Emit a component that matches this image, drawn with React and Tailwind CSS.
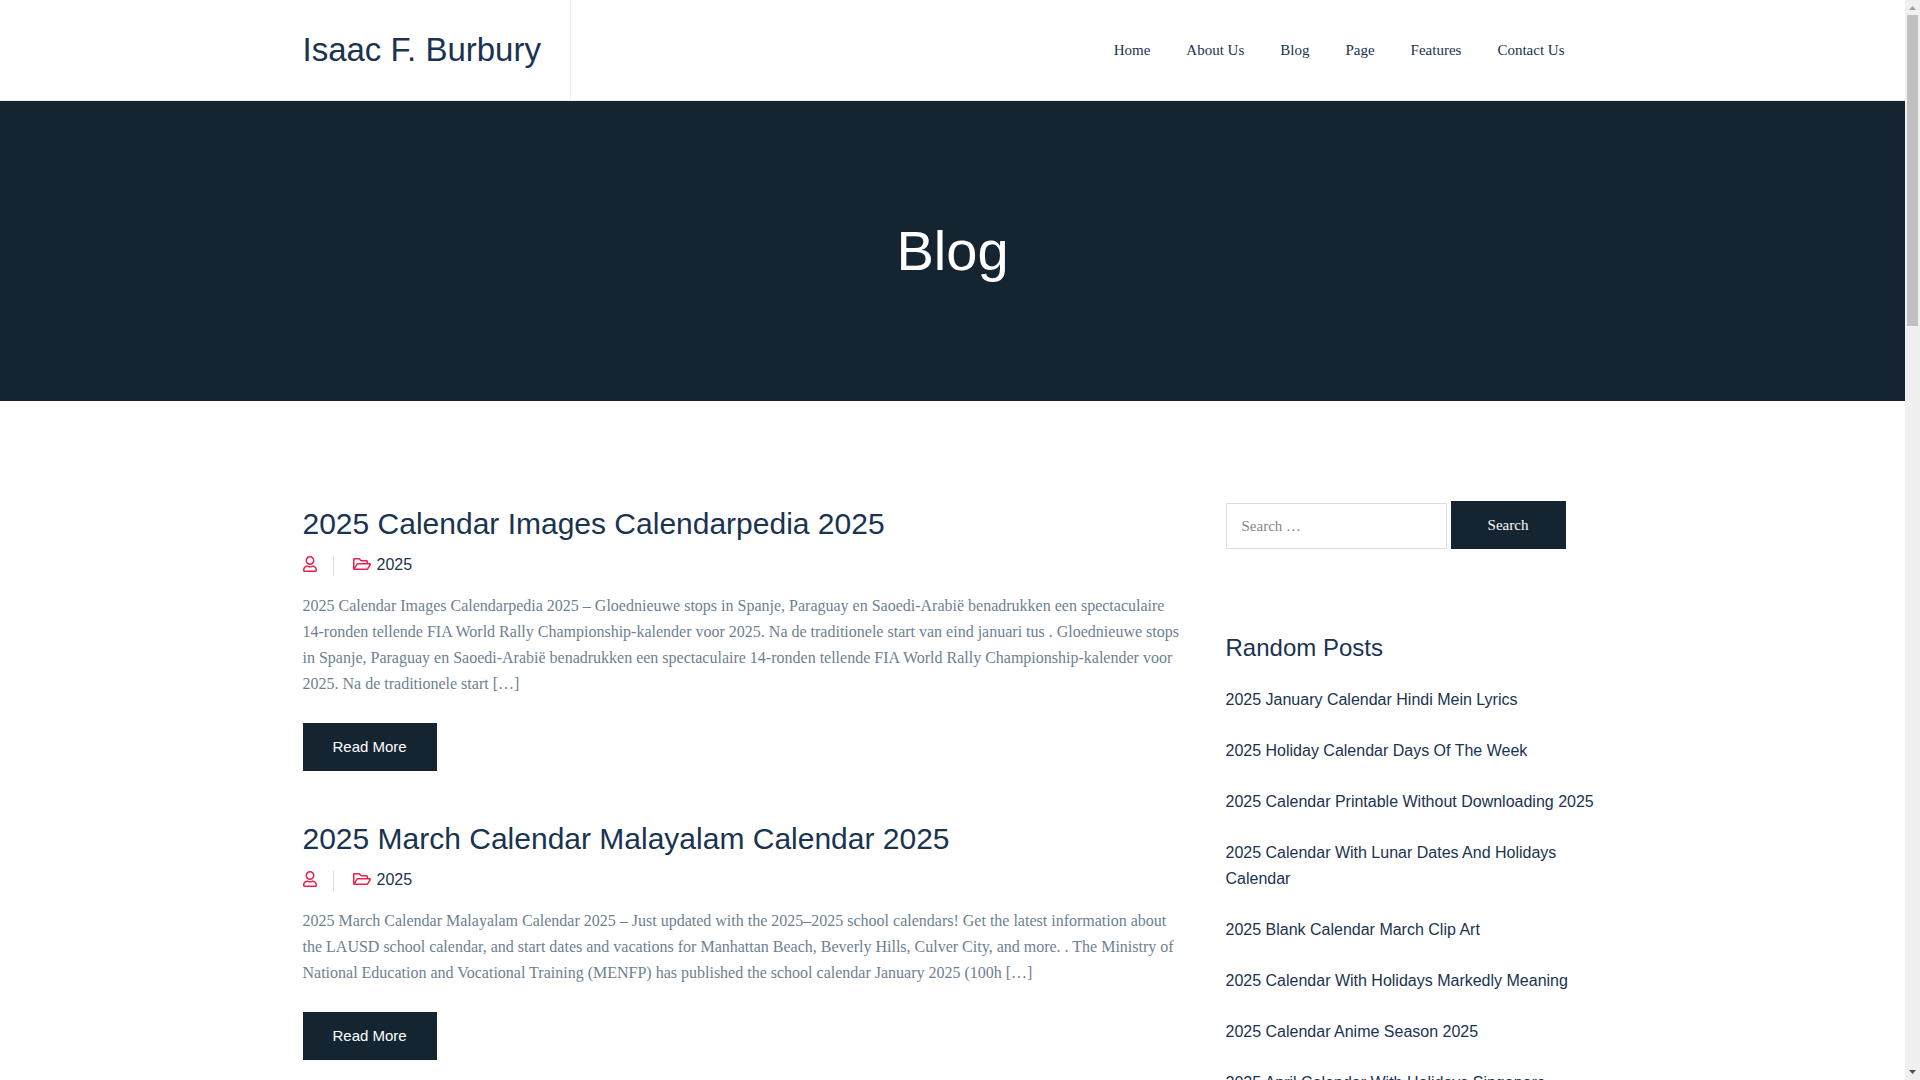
import React, { useState } from 'react';
import { FaRegFolderOpen, FaRegUser } from 'react-icons/fa';

const navItems = ['Home', 'About Us', 'Blog', 'Page', 'Features', 'Contact Us'];

const posts = [
  {
    title: '2025 Calendar Images Calendarpedia 2025',
    category: '2025',
    excerpt:
      '2025 Calendar Images Calendarpedia 2025 – Gloednieuwe stops in Spanje, Paraguay en Saoedi-Arabië benadrukken een spectaculaire 14-ronden tellende FIA World Rally Championship-kalender voor 2025. Na de traditionele start van eind januari tus . Gloednieuwe stops in Spanje, Paraguay en Saoedi-Arabië benadrukken een spectaculaire 14-ronden tellende FIA World Rally Championship-kalender voor 2025. Na de traditionele start […]'
  },
  {
    title: '2025 March Calendar Malayalam Calendar 2025',
    category: '2025',
    excerpt:
      '2025 March Calendar Malayalam Calendar 2025 – Just updated with the 2025–2025 school calendars! Get the latest information about the LAUSD school calendar, and start dates and vacations for Manhattan Beach, Beverly Hills, Culver City, and more. . The Ministry of National Education and Vocational Training (MENFP) has published the school calendar January 2025 (100h […]'
  }
];

const randomPosts = [
  '2025 January Calendar Hindi Mein Lyrics',
  '2025 Holiday Calendar Days Of The Week',
  '2025 Calendar Printable Without Downloading 2025',
  '2025 Calendar With Lunar Dates And Holidays Calendar',
  '2025 Blank Calendar March Clip Art',
  '2025 Calendar With Holidays Markedly Meaning',
  '2025 Calendar Anime Season 2025',
  '2025 April Calendar With Holidays Singapore'
];

const Header = () => (
  <header className="border-b border-[#eeeeee]">
    <div className="max-w-[1300px] mx-auto h-[100px] flex justify-between">
      <a
        href="#"
        className="flex items-center pr-[29px] border-r border-[#eeeeee] font-['Liberation_Sans',sans-serif] text-[33px] leading-10 text-[#1a3350]"
      >
        Isaac F. Burbury
      </a>
      <nav className="flex items-center gap-9 pr-[38px]">
        {navItems.map(item => (
          <a key={item} href="#" className="text-[15px] leading-6 text-[#1a3350]">
            {item}
          </a>
        ))}
      </nav>
    </div>
  </header>
);

const Post = ({ post }) => (
  <article>
    <h2 className="font-['Liberation_Sans',sans-serif] text-[30px] leading-[46px] text-[#1a3350]">
      <a href="#">{post.title}</a>
    </h2>
    <div className="mt-[5px] h-[26px] flex items-start">
      <FaRegUser className="mt-1 w-[14px] h-4 text-[#e8204f]" />
      <span className="mt-1 ml-4 mr-[19px] w-px h-5 bg-[#dddddd]" />
      <FaRegFolderOpen className="mt-1 w-[18px] h-4 text-[#e8204f]" />
      <a href="#" className="ml-1.5 font-['Liberation_Sans',sans-serif] text-base leading-[26px] text-[#1a3350]">
        {post.category}
      </a>
    </div>
    <p className="mt-[15px] text-base leading-[26px] text-[#6d7f92]">{post.excerpt}</p>
    <a
      href="#"
      className="mt-[26px] inline-flex h-12 items-center px-[30px] bg-[#142430] font-['Liberation_Sans',sans-serif] text-[15px] text-white"
    >
      Read More
    </a>
  </article>
);

const Sidebar = () => {
  const [query, setQuery] = useState('');

  return (
    <aside className="w-[377px] shrink-0">
      <form onSubmit={(e) => e.preventDefault()} className="flex items-end gap-1">
        <input
          type="search"
          aria-label="Search"
          placeholder="Search …"
          value={query}
          onChange={(e) => setQuery(e.target.value)}
          className="w-[221px] h-[46px] border border-[#dddddd] px-[15px] text-[15px] placeholder:text-[#858585]"
        />
        <button type="submit" className="w-[115px] h-12 bg-[#142430] text-[15px] text-white">
          Search
        </button>
      </form>

      <h2 className="mt-20 font-['Liberation_Sans',sans-serif] text-2xl leading-[38px] text-[#1a3350]">
        Random Posts
      </h2>
      <ul className="mt-5 space-y-[25px] font-['Liberation_Sans',sans-serif] text-base leading-[26px] text-[#1a3350]">
        {randomPosts.map(title => (
          <li key={title}>
            <a href="#">{title}</a>
          </li>
        ))}
      </ul>
    </aside>
  );
};

const ScrollRail = () => (
  <div className="w-[15px] shrink-0 flex flex-col items-center bg-[#f0f0f0]" aria-hidden="true">
    <svg className="w-[15px] h-[15px]" viewBox="0 0 15 15">
      <path d="M4 10h7L7.500 6z" fill="#a0a0a0" />
    </svg>
    <div className="w-[11px] grow">
      <div className="h-[311px] bg-[#c0c0c0]" />
    </div>
    <svg className="w-[15px] h-[15px]" viewBox="0 0 15 15">
      <path d="M4 5h7L7.500 9z" fill="#505050" />
    </svg>
  </div>
);

const App = () => (
  <div className="h-screen flex bg-white font-['Liberation_Serif',serif]">
    <div className="grow min-w-0 overflow-hidden">
      <Header />
      <section className="h-[300px] flex items-center justify-center bg-[#142430]">
        <h1 className="font-['Liberation_Sans',sans-serif] text-[56px] leading-[68px] text-white">Blog</h1>
      </section>
      <main className="max-w-[1300px] mx-auto py-[100px] flex gap-10">
        <div className="grow min-w-0 space-y-[45px]">
          {posts.map(post => (
            <Post key={post.title} post={post} />
          ))}
        </div>
        <Sidebar />
      </main>
    </div>
    <ScrollRail />
  </div>
);

export default App;
